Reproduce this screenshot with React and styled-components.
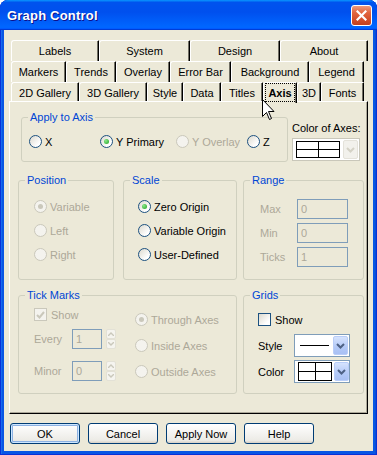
import React from 'react'
import styled, { createGlobalStyle } from 'styled-components'

const GlobalStyle = createGlobalStyle`
  html, body {
    margin: 0;
    padding: 0;
    background: #fff;
    overflow: hidden;
  }
  body {
    font-family: "Liberation Sans", Arial, sans-serif;
    font-size: 11px;
    color: #000;
  }
`

const Frame = styled.div`
  position: relative;
  width: 377px;
  height: 455px;
  box-sizing: border-box;
  border-radius: 8px 8px 0 0;
  background: #0856E4;
  box-shadow: inset 1px 0 #0831D9, inset -1px 0 #0831D9, inset 0 -1px #0831D9, inset 2px 0 #166AEE, inset -2px 0 #0A4FD4;
  display: flex;
  flex-direction: column;
  overflow: hidden;
`
const TitleBar = styled.div`
  height: 30px;
  flex-shrink: 0;
  display: flex;
  align-items: center;
  justify-content: space-between;
  padding: 0 5px 0 7px;
  border-radius: 8px 8px 0 0;
  background: linear-gradient(180deg, #0997ff, #0053ee 8%, #0050ee 40%, #06f 88%, #06f 93%, #005bff 95%, #003dd7 96%, #003dd7);
`
const Title = styled.span`
  color: #fff;
  font-weight: bold;
  font-size: 13px;
  letter-spacing: 0.2px;
  text-shadow: 1px 1px #0f1089;
`
const CloseButton = styled.div`
  width: 21px;
  height: 21px;
  box-sizing: border-box;
  border: 1px solid #fff;
  border-radius: 3px;
  background: linear-gradient(180deg, #ec9a7e 0%, #e2663f 35%, #d4502c 70%, #c2401f 100%);
  display: flex;
  align-items: center;
  justify-content: center;
`
const Client = styled.div`
  flex: 1;
  margin: 0 4px 4px;
  background: #ECE9D8;
  padding: 10px 0 0 5px;
  display: flex;
  flex-direction: column;
`
const TabRows = styled.div`
  margin-left: 2px;
  display: flex;
  flex-direction: column;
`
const TabRow = styled.div`
  display: flex;
  height: 21px;
`
const Tab = styled.div`
  position: relative;
  z-index: ${p => (p.$active ? 2 : 0)};
  width: ${p => p.$w}px;
  height: 21px;
  box-sizing: border-box;
  flex-shrink: 0;
  background: #ECE9D8;
  border-top: 1px solid #fff;
  border-left: 1px solid #fff;
  border-right: 1px solid #000;
  box-shadow: inset -1px 0 #716F64;
  border-radius: 3px 1px 0 0;
  display: flex;
  align-items: center;
  justify-content: center;
  padding-bottom: 1px;
  font-weight: ${p => (p.$active ? 'bold' : 'normal')};
`
const FocusRing = styled.span`
  align-self: stretch;
  flex: 1;
  margin: 0 1px 0 1px;
  border: 1px dotted #000;
  display: flex;
  align-items: center;
  justify-content: center;
`
const Panel = styled.div`
  position: relative;
  z-index: 1;
  margin-top: -2px;
  width: 359px;
  height: 313px;
  box-sizing: border-box;
  background: #ECE9D8;
  border: 1px solid;
  border-color: #fff #000 #000 #fff;
  box-shadow: inset -1px -1px #ACA899;
  padding-left: 8px;
  display: flex;
  flex-direction: column;
`
const Row = styled.div`
  display: flex;
  align-items: flex-start;
  margin-top: ${p => p.$top}px;
`
const Group = styled.div`
  width: ${p => p.$w}px;
  height: ${p => p.$h}px;
  margin-left: ${p => p.$left || 0}px;
  box-sizing: border-box;
  flex-shrink: 0;
  border: 1px solid #D0D0BF;
  border-radius: 3px;
  display: flex;
  flex-direction: column;
`
const Caption = styled.span`
  display: block;
  width: max-content;
  margin: -7px 0 0 6px;
  padding: 0 2px;
  line-height: 13px;
  background: #ECE9D8;
  color: #0046D5;
`
const OptionList = styled.div`
  display: flex;
  flex-direction: ${p => (p.$row ? 'row' : 'column')};
  gap: ${p => p.$gap || 0}px;
  padding: ${p => p.$top}px 0 0 ${p => p.$left}px;
`
const Option = styled.div`
  display: flex;
  align-items: center;
  gap: ${p => p.$gap || 3}px;
  height: 13px;
  width: ${p => (p.$w ? `${p.$w}px` : 'auto')};
  color: ${p => (p.$disabled ? '#ACA899' : '#000')};
  white-space: nowrap;
`
const Radio = styled.span`
  width: 13px;
  height: 13px;
  box-sizing: border-box;
  flex-shrink: 0;
  border-radius: 50%;
  border: 1px solid ${p => (p.$disabled ? '#CAC8BB' : '#1C5180')};
  background: ${p => (p.$disabled ? '#F4F3EE' : 'linear-gradient(135deg, #DCD9CE, #fff 75%)')};
  display: flex;
  align-items: center;
  justify-content: center;
  &::after {
    content: '';
    display: ${p => (p.$checked ? 'block' : 'none')};
    width: 5px;
    height: 5px;
    border-radius: 50%;
    background: ${p => (p.$disabled ? '#CAC8BB' : 'radial-gradient(circle at 35% 35%, #8AE88A, #21A121)')};
  }
`
const Check = styled.span`
  width: 13px;
  height: 13px;
  box-sizing: border-box;
  flex-shrink: 0;
  border: 1px solid ${p => (p.$disabled ? '#CAC8BB' : '#1C5180')};
  background: ${p => (p.$disabled ? '#F4F3EE' : 'linear-gradient(135deg, #DCD9CE, #fff 75%)')};
  display: flex;
  align-items: center;
  justify-content: center;
`
const FieldRow = styled.div`
  display: flex;
  align-items: center;
  margin-top: ${p => p.$top || 0}px;
  color: #ACA899;
`
const FieldLabel = styled.span`
  width: ${p => p.$w}px;
  flex-shrink: 0;
  color: ${p => (p.$disabled ? '#ACA899' : '#000')};
`
const Field = styled.div`
  width: ${p => p.$w}px;
  height: 20px;
  box-sizing: border-box;
  border: 1px solid #7F9DB9;
  padding-left: 3px;
  display: flex;
  align-items: center;
  color: #ACA899;
`
const Spinner = styled.div`
  display: flex;
  flex-direction: column;
  margin-left: 4px;
`
const SpinPart = styled.div`
  width: 10px;
  height: 10px;
  box-sizing: border-box;
  border: 1px solid #E3E1D6;
  border-radius: 2px;
  background: #F5F4EF;
  display: flex;
  align-items: center;
  justify-content: center;
`
const Columns = styled.div`
  display: flex;
`
const Column = styled.div`
  width: ${p => (p.$w ? `${p.$w}px` : 'auto')};
  box-sizing: border-box;
  flex-shrink: 0;
  display: flex;
  flex-direction: column;
  padding: ${p => p.$top}px 0 0 ${p => p.$left || 0}px;
  gap: ${p => p.$gap || 0}px;
`
const ColorAxes = styled.div`
  margin-left: 4px;
  display: flex;
  flex-direction: column;
`
const Label = styled.span`
  line-height: 13px;
  margin-top: ${p => p.$top || 0}px;
`
const Combo = styled.div`
  width: ${p => p.$w}px;
  height: ${p => p.$h}px;
  margin-top: ${p => p.$top || 0}px;
  box-sizing: border-box;
  flex-shrink: 0;
  border: 1px solid ${p => (p.$disabled ? '#C9C7BA' : '#7F9DB9')};
  background: #fff;
  padding: 1px;
  display: flex;
  align-items: stretch;
`
const Preview = styled.div`
  flex: 1;
  display: flex;
  align-items: center;
  padding: 1px 2px;
`
const DropButton = styled.div`
  width: 15px;
  flex-shrink: 0;
  box-sizing: border-box;
  border-radius: 2px;
  border: 1px solid ${p => (p.$disabled ? '#E4E2DA' : '#B9CDF8')};
  background: ${p => (p.$disabled ? '#F2F1EC' : 'linear-gradient(180deg, #D6E3FE, #B3C9F7 60%, #A8C0F4)')};
  display: flex;
  align-items: center;
  justify-content: center;
`
const StyleLine = styled.div`
  width: 29px;
  height: 1px;
  margin-left: 2px;
  background: #000;
`
const ButtonRow = styled.div`
  display: flex;
  gap: 8px;
  margin: 9px 0 0 1px;
`
const Button = styled.div`
  width: 70px;
  height: 21px;
  box-sizing: border-box;
  border: 1px solid #003C74;
  border-radius: 3px;
  background: linear-gradient(180deg, #fff, #ECEBE6 86%, #D6D0C5);
  box-shadow: ${p => (p.$default ? 'inset 0 0 0 1px #CEE7FF, inset 0 0 0 2px #8DB2E3' : 'none')};
  display: flex;
  align-items: center;
  justify-content: center;
`
const Cursor = styled.svg`
  position: absolute;
  left: 262px;
  top: 99px;
  z-index: 5;
`

const Chevron = ({ color }) => (
  <svg width="9" height="6" viewBox="0 0 9 6">
    <path d="M1 1l3.5 3.5L8 1" fill="none" stroke={color} strokeWidth="2" />
  </svg>
)

const SpinArrow = ({ up }) => (
  <svg width="6" height="4" viewBox="0 0 6 4">
    <path d={up ? 'M0 4L3 1L6 4' : 'M0 0L3 3L6 0'} fill="none" stroke="#CAC8BB" strokeWidth="1.4" />
  </svg>
)

const Swatch = ({ w, h }) => (
  <svg width={w} height={h} viewBox={`0 0 ${w} ${h}`}>
    <rect x="0.5" y="0.5" width={w - 1} height={h - 1} fill="#fff" stroke="#000" />
    <line x1="0" y1={Math.floor(h / 2) + 0.5} x2={w} y2={Math.floor(h / 2) + 0.5} stroke="#000" />
    <line x1={Math.floor(w / 2) + 0.5} y1="0" x2={Math.floor(w / 2) + 0.5} y2={h} stroke="#000" />
  </svg>
)

const tabRows = [
  [['Labels', 88], ['System', 91], ['Design', 90], ['About', 88]],
  [['Markers', 55], ['Trends', 50], ['Overlay', 54], ['Error Bar', 61], ['Background', 78], ['Legend', 55]],
  [['2D Gallery', 68], ['3D Gallery', 68], ['Style', 36], ['Data', 38], ['Titles', 42], ['Axis', 34], ['3D', 24], ['Fonts', 43]],
]

const RadioOption = ({ label, checked, disabled, w }) => (
  <Option $disabled={disabled} $w={w}>
    <Radio $checked={checked} $disabled={disabled} />
    {label}
  </Option>
)

function App() {
  return (
    <>
      <GlobalStyle />
      <Frame>
        <TitleBar>
          <Title>Graph Control</Title>
          <CloseButton>
            <svg width="11" height="11" viewBox="0 0 11 11">
              <path d="M1.5 1.5l8 8M9.5 1.5l-8 8" stroke="#fff" strokeWidth="2.2" strokeLinecap="square" />
            </svg>
          </CloseButton>
        </TitleBar>
        <Client>
          <TabRows>
            {tabRows.map((row, i) => (
              <TabRow key={i}>
                {row.map(([name, w]) =>
                  name === 'Axis' ? (
                    <Tab key={name} $w={w} $active>
                      <FocusRing>{name}</FocusRing>
                    </Tab>
                  ) : (
                    <Tab key={name} $w={w}>{name}</Tab>
                  )
                )}
              </TabRow>
            ))}
          </TabRows>
          <Panel>
            <Row $top={15}>
              <Group $w={267} $h={45} $left={3}>
                <Caption>Apply to Axis</Caption>
                <OptionList $row $top={11} $left={7}>
                  <RadioOption label="X" w={71} />
                  <RadioOption label="Y Primary" checked w={76} />
                  <RadioOption label="Y Overlay" disabled w={71} />
                  <RadioOption label="Z" />
                </OptionList>
              </Group>
              <ColorAxes>
                <Label $top={5}>Color of Axes:</Label>
                <Combo $w={68} $h={23} $top={3} $disabled>
                  <Preview>
                    <Swatch w={44} h={17} />
                  </Preview>
                  <DropButton $disabled>
                    <Chevron color="#D4D2C6" />
                  </DropButton>
                </Combo>
              </ColorAxes>
            </Row>

            <Row $top={18}>
              <Group $w={96} $h={100}>
                <Caption>Position</Caption>
                <OptionList $top={13} $left={15} $gap={11}>
                  <RadioOption label="Variable" checked disabled />
                  <RadioOption label="Left" disabled />
                  <RadioOption label="Right" disabled />
                </OptionList>
              </Group>
              <Group $w={114} $h={100} $left={9}>
                <Caption>Scale</Caption>
                <OptionList $top={13} $left={14} $gap={11}>
                  <RadioOption label="Zero Origin" checked />
                  <RadioOption label="Variable Origin" />
                  <RadioOption label="User-Defined" />
                </OptionList>
              </Group>
              <Group $w={121} $h={100} $left={6}>
                <Caption>Range</Caption>
                <Column $top={12} $left={16} $gap={4}>
                  {[['Max', '0'], ['Min', '0'], ['Ticks', '1']].map(([l, v]) => (
                    <FieldRow key={l}>
                      <FieldLabel $w={37} $disabled>{l}</FieldLabel>
                      <Field $w={51}>{v}</Field>
                    </FieldRow>
                  ))}
                </Column>
              </Group>
            </Row>

            <Row $top={15}>
              <Group $w={219} $h={99}>
                <Caption>Tick Marks</Caption>
                <Columns>
                  <Column $w={116} $top={6} $left={15}>
                    <Option $disabled $gap={4}>
                      <Check $disabled>
                        <svg width="9" height="8" viewBox="0 0 9 8">
                          <path d="M1 4l2.5 2.5L8 1" fill="none" stroke="#CAC8BB" strokeWidth="2" />
                        </svg>
                      </Check>
                      Show
                    </Option>
                    <FieldRow $top={8}>
                      <FieldLabel $w={38} $disabled>Every</FieldLabel>
                      <Field $w={30}>1</Field>
                      <Spinner>
                        <SpinPart><SpinArrow up /></SpinPart>
                        <SpinPart><SpinArrow /></SpinPart>
                      </Spinner>
                    </FieldRow>
                    <FieldRow $top={12}>
                      <FieldLabel $w={38} $disabled>Minor</FieldLabel>
                      <Field $w={30}>0</Field>
                      <Spinner>
                        <SpinPart><SpinArrow up /></SpinPart>
                        <SpinPart><SpinArrow /></SpinPart>
                      </Spinner>
                    </FieldRow>
                  </Column>
                  <Column $top={11} $gap={13}>
                    <RadioOption label="Through Axes" checked disabled />
                    <RadioOption label="Inside Axes" disabled />
                    <RadioOption label="Outside Axes" disabled />
                  </Column>
                </Columns>
              </Group>
              <Group $w={121} $h={99} $left={6}>
                <Caption>Grids</Caption>
                <Column $top={11} $left={14}>
                  <Option $gap={4}>
                    <Check />
                    Show
                  </Option>
                  <FieldRow $top={8}>
                    <FieldLabel $w={36}>Style</FieldLabel>
                    <Combo $w={56} $h={23}>
                      <Preview>
                        <StyleLine />
                      </Preview>
                      <DropButton>
                        <Chevron color="#4D6185" />
                      </DropButton>
                    </Combo>
                  </FieldRow>
                  <FieldRow $top={3}>
                    <FieldLabel $w={36}>Color</FieldLabel>
                    <Combo $w={56} $h={23}>
                      <Preview>
                        <Swatch w={34} h={19} />
                      </Preview>
                      <DropButton>
                        <Chevron color="#4D6185" />
                      </DropButton>
                    </Combo>
                  </FieldRow>
                </Column>
              </Group>
            </Row>
          </Panel>
          <ButtonRow>
            <Button $default>OK</Button>
            <Button>Cancel</Button>
            <Button>Apply Now</Button>
            <Button>Help</Button>
          </ButtonRow>
        </Client>
        <Cursor width="13" height="21" viewBox="0 0 13 21">
          <path d="M0.5 0.5V17.5L4.5 13.5L7.5 20.5L9.5 19.5L6.5 12.5H12L0.5 0.5Z" fill="#fff" stroke="#000" />
        </Cursor>
      </Frame>
    </>
  )
}

export default App
